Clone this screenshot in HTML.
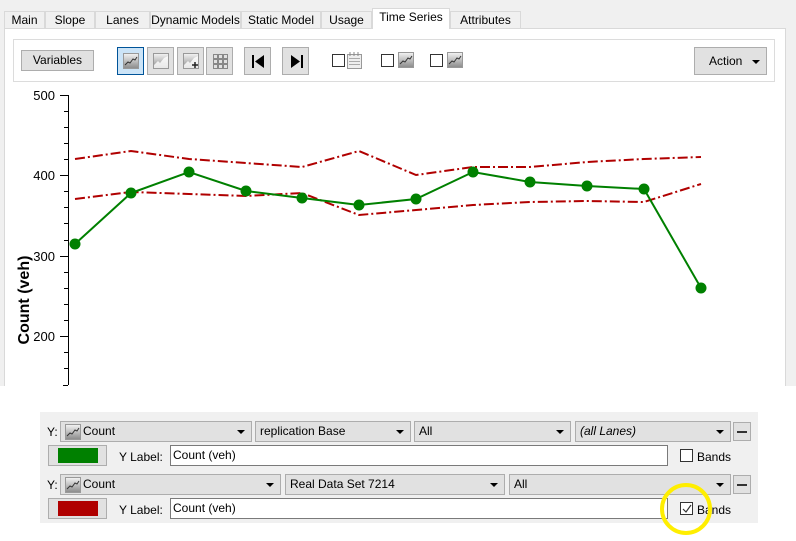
<!DOCTYPE html>
<html><head><style>
*{box-sizing:border-box;margin:0;padding:0}
body{width:796px;height:541px;background:#fff;font-family:"Liberation Sans",sans-serif;font-size:12px;color:#000;position:relative;overflow:hidden}
.a{position:absolute}
.top{left:0;top:0;width:796px;height:386px;background:#f0f0f0}
.tab{position:absolute;top:11px;height:18px;background:#f0f0f0;border:1px solid #d9d9d9;border-bottom:none;font-size:12px;text-align:center;line-height:17px}
.tab.sel{top:8px;height:21px;background:#fff;z-index:2}
.panel{left:4px;top:28px;width:782px;height:358px;background:#fff;border:1px solid #d9d9d9;border-bottom:none}
.tb{left:13px;top:39px;width:762px;height:43px;border:1px solid #dcdcdc;background:#fff}
.btn{position:absolute;background:#e1e1e1;border:1px solid #adadad}
.cb{position:absolute;width:13px;height:13px;border:1px solid #333;background:#fff}
.combo{position:absolute;height:21px;background:#e1e1e1;border:1px solid #adadad;font-size:12px;line-height:19px;padding-left:4px}
.combo:after{content:"";position:absolute;right:6px;top:8px;border-left:4px solid transparent;border-right:4px solid transparent;border-top:4px solid #000}
.inp{position:absolute;height:21px;background:#fff;border:1px solid #7a7a7a;line-height:19px;padding-left:2px}
.ic{position:absolute;width:16px;height:16px}
.minus{position:absolute;width:18px;height:19px;background:#e1e1e1;border:1px solid #adadad}
.minus:after{content:"";position:absolute;left:3px;top:8px;width:10px;height:2px;background:#333}
</style></head><body>
<svg width="0" height="0" style="position:absolute"><defs>
<linearGradient id="g" x1="0" y1="0" x2="0" y2="1"><stop offset="0" stop-color="#f4f4f4"/><stop offset="1" stop-color="#8a8a8a"/></linearGradient>
<symbol id="chart" viewBox="0 0 16 16"><rect x="0.5" y="0.5" width="15" height="15" fill="url(#g)" stroke="#999"/><polyline points="2,12 5,9 7,10 10,6 12,7 14,4" fill="none" stroke="#333" stroke-width="1"/></symbol>
<symbol id="area" viewBox="0 0 16 16"><rect x="0.5" y="0.5" width="15" height="15" fill="url(#g)" stroke="#999"/><polygon points="1,15 1,12 5,8 7,10 11,5 15,3 15,15" fill="#fff" opacity=".8"/></symbol>
</defs></svg>
<div class="a top"></div>
<div class="tab" style="left:4px;width:41px">Main</div>
<div class="tab" style="left:45px;width:50px">Slope</div>
<div class="tab" style="left:95px;width:55px">Lanes</div>
<div class="tab" style="left:150px;width:91px">Dynamic Models</div>
<div class="tab" style="left:241px;width:80px">Static Model</div>
<div class="tab" style="left:321px;width:51px">Usage</div>
<div class="tab sel" style="left:372px;width:78px">Time Series</div>
<div class="tab" style="left:450px;width:71px">Attributes</div>
<div class="a panel"></div>
<div class="a tb"></div>
<div class="btn" style="left:21px;top:50px;width:73px;height:21px;text-align:center;line-height:19px">Variables</div>
<div class="btn" style="left:117px;top:47px;width:27px;height:28px;background:#cce4f7;border-color:#005499"><svg class="ic" style="left:5px;top:5px"><use href="#chart"/></svg></div>
<div class="btn" style="left:147px;top:47px;width:27px;height:28px"><svg class="ic" style="left:5px;top:5px"><use href="#area"/></svg></div>
<div class="btn" style="left:177px;top:47px;width:27px;height:28px"><svg class="ic" style="left:5px;top:5px"><use href="#area"/><path d="M9 12h6M12 9v6" stroke="#222" stroke-width="1.5"/></svg></div>
<div class="btn" style="left:206px;top:47px;width:27px;height:28px"><svg class="a" style="left:6px;top:6px" width="15" height="15"><g fill="none" stroke="#888"><rect x="0.5" y="0.5" width="4" height="4"/><rect x="5.5" y="0.5" width="4" height="4"/><rect x="10.5" y="0.5" width="4" height="4"/><rect x="0.5" y="5.5" width="4" height="4"/><rect x="5.5" y="5.5" width="4" height="4"/><rect x="10.5" y="5.5" width="4" height="4"/><rect x="0.5" y="10.5" width="4" height="4"/><rect x="5.5" y="10.5" width="4" height="4"/><rect x="10.5" y="10.5" width="4" height="4"/></g></svg></div>
<div class="btn" style="left:244px;top:47px;width:27px;height:28px"><svg class="a" style="left:7px;top:7px" width="13" height="13"><rect x="0" y="0" width="2" height="13"/><polygon points="12,0 12,13 3,6.5"/></svg></div>
<div class="btn" style="left:282px;top:47px;width:27px;height:28px"><svg class="a" style="left:7px;top:7px" width="13" height="13"><rect x="11" y="0" width="2" height="13"/><polygon points="1,0 1,13 10,6.5"/></svg></div>
<div class="cb" style="left:332px;top:54px"></div>
<svg class="a" style="left:347px;top:52px" width="15" height="17"><rect x="0.5" y="2.5" width="14" height="14" fill="#eee" stroke="#999"/><g stroke="#aaa"><path d="M2 6.5h11M2 9.5h11M2 12.5h11"/><path d="M3 0v4M7 0v4M11 0v4" stroke="#888"/></g></svg>
<div class="cb" style="left:381px;top:54px"></div>
<svg class="ic" style="left:398px;top:52px"><use href="#chart"/></svg>
<div class="cb" style="left:430px;top:54px"></div>
<svg class="ic" style="left:447px;top:52px"><use href="#chart"/></svg>
<div class="btn" style="left:694px;top:47px;width:73px;height:28px;line-height:26px;padding-left:14px">Action<span class="a" style="right:6px;top:12px;border-left:4px solid transparent;border-right:4px solid transparent;border-top:4px solid #000"></span></div>

<svg class="a" style="left:0;top:0" width="796" height="390">
<g font-family="Liberation Sans" font-size="13" text-anchor="end">
<text x="55" y="100">500</text><text x="55" y="180">400</text><text x="55" y="261">300</text><text x="55" y="341">200</text></g>
<text transform="translate(29,300) rotate(-90)" text-anchor="middle" font-size="16" font-weight="bold" font-family="Liberation Sans">Count (veh)</text>
<g stroke="#000" stroke-width="1">
<line x1="68.5" y1="95" x2="68.5" y2="385"/><line x1="68" y1="385.5" x2="63" y2="385.5"/>
<line x1="60" y1="95.5" x2="68" y2="95.5"/><line x1="60" y1="175.5" x2="68" y2="175.5"/><line x1="60" y1="256.5" x2="68" y2="256.5"/><line x1="60" y1="336.5" x2="68" y2="336.5"/>
<line x1="64" y1="111.5" x2="68" y2="111.5"/><line x1="64" y1="127.5" x2="68" y2="127.5"/><line x1="64" y1="143.5" x2="68" y2="143.5"/><line x1="64" y1="159.5" x2="68" y2="159.5"/>
<line x1="64" y1="191.5" x2="68" y2="191.5"/><line x1="64" y1="207.5" x2="68" y2="207.5"/><line x1="64" y1="223.5" x2="68" y2="223.5"/><line x1="64" y1="240.5" x2="68" y2="240.5"/>
<line x1="64" y1="272.5" x2="68" y2="272.5"/><line x1="64" y1="288.5" x2="68" y2="288.5"/><line x1="64" y1="304.5" x2="68" y2="304.5"/><line x1="64" y1="320.5" x2="68" y2="320.5"/>
<line x1="64" y1="352.5" x2="68" y2="352.5"/><line x1="64" y1="368.5" x2="68" y2="368.5"/>
</g>
<g fill="none" stroke="#b00000" stroke-width="2" stroke-dasharray="10,3,2,3">
<polyline points="75,159 131,151 189,159 246,163 302,167 359,151 416,175 473,167 530,167 587,162 644,159 701,157"/>
<polyline points="75,199 131,192 189,194 246,196 302,193 359,215 416,210 473,205 530,202 587,201 644,202 701,184"/>
</g>
<polyline fill="none" stroke="#008000" stroke-width="2" points="75,244 131,193 189,172 246,191 302,198 359,205 416,199 473,172 530,182 587,186 644,189 701,288"/>
<g fill="#008000">
<circle cx="75" cy="244" r="5.5"/><circle cx="131" cy="193" r="5.5"/><circle cx="189" cy="172" r="5.5"/><circle cx="246" cy="191" r="5.5"/><circle cx="302" cy="198" r="5.5"/><circle cx="359" cy="205" r="5.5"/><circle cx="416" cy="199" r="5.5"/><circle cx="473" cy="172" r="5.5"/><circle cx="530" cy="182" r="5.5"/><circle cx="587" cy="186" r="5.5"/><circle cx="644" cy="189" r="5.5"/><circle cx="701" cy="288" r="5.5"/></g>
</svg>

<div class="a" style="left:40px;top:412px;width:718px;height:111px;background:#f0f0f0"></div>
<div class="a" style="left:47px;top:425px">Y:</div>
<div class="combo" style="left:60px;top:421px;width:192px;padding-left:22px"><svg class="ic" style="left:4px;top:2px"><use href="#chart"/></svg>Count</div>
<div class="combo" style="left:255px;top:421px;width:156px">replication Base</div>
<div class="combo" style="left:414px;top:421px;width:157px">All</div>
<div class="combo" style="left:575px;top:421px;width:156px;font-style:italic">(all Lanes)</div>
<div class="minus" style="left:733px;top:422px"></div>
<div class="btn" style="left:48px;top:445px;width:59px;height:21px"><div class="a" style="left:9px;top:2px;width:40px;height:15px;background:#008000"></div></div>
<div class="a" style="left:119px;top:450px">Y Label:</div>
<div class="inp" style="left:170px;top:445px;width:498px">Count (veh)</div>
<div class="cb" style="left:680px;top:449px"></div>
<div class="a" style="left:697px;top:450px">Bands</div>

<div class="a" style="left:47px;top:478px">Y:</div>
<div class="combo" style="left:60px;top:474px;width:221px;padding-left:22px"><svg class="ic" style="left:4px;top:2px"><use href="#chart"/></svg>Count</div>
<div class="combo" style="left:285px;top:474px;width:220px">Real Data Set 7214</div>
<div class="combo" style="left:509px;top:474px;width:222px">All</div>
<div class="minus" style="left:733px;top:475px"></div>
<div class="btn" style="left:48px;top:498px;width:59px;height:21px"><div class="a" style="left:9px;top:2px;width:40px;height:15px;background:#b00000"></div></div>
<div class="a" style="left:119px;top:503px">Y Label:</div>
<div class="inp" style="left:170px;top:498px;width:498px">Count (veh)</div>
<div class="cb" style="left:680px;top:502px"><svg class="a" style="left:1px;top:1px" width="10" height="10"><polyline points="1,5 4,8 9,1" fill="none" stroke="#333" stroke-width="1.2"/></svg></div>
<div class="a" style="left:697px;top:503px">Bands</div>
<svg class="a" style="left:650px;top:478px" width="70" height="62"><circle cx="36" cy="31" r="24" fill="none" stroke="#ffee00" stroke-width="4"/></svg>
</body></html>
